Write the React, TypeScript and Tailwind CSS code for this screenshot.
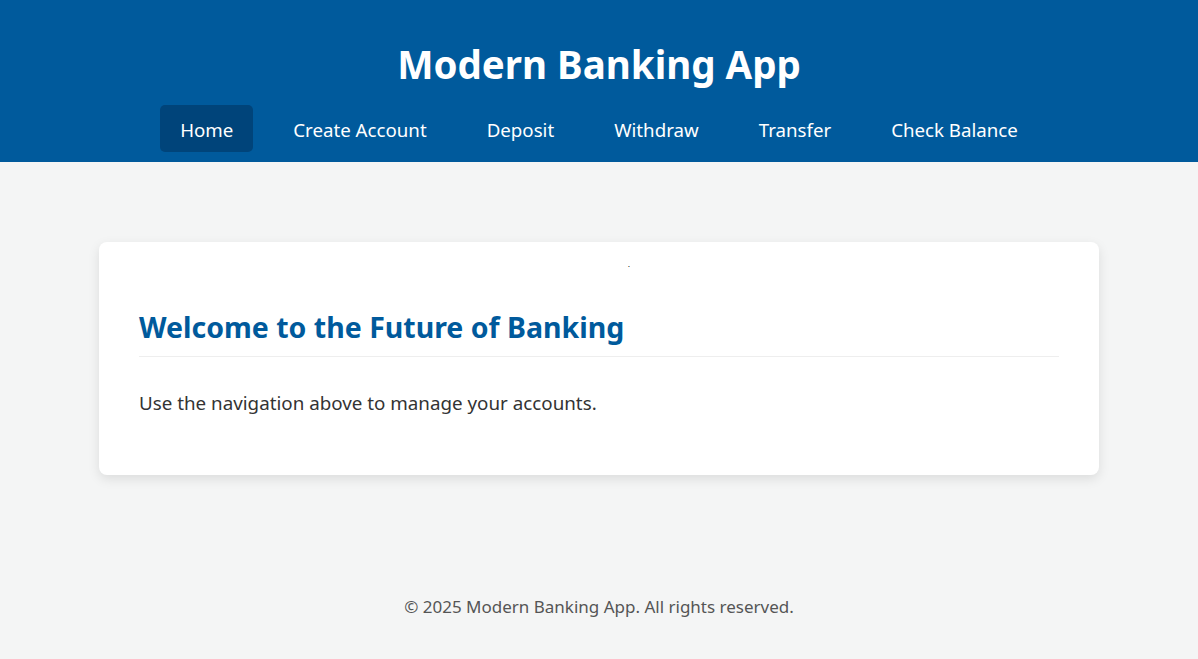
export default function App() {
  const links = ['Home', 'Create Account', 'Deposit', 'Withdraw', 'Transfer', 'Check Balance'];

  return (
    <div
      className="min-h-[659px] flex flex-col bg-[#f4f5f5] text-[#333]"
      style={{ fontFamily: '"Noto Sans", "Open Sans", sans-serif' }}
    >
      <header className="bg-[#005a9c] text-white pt-[36px] pb-[10px]">
        <h1 className="text-center text-[38.5px] font-bold leading-[56px]">Modern Banking App</h1>
        <nav className="mt-[13px] flex justify-center gap-[20px]">
          {links.map((link, i) => (
            <a
              key={link}
              href="#"
              className={
                'px-[20px] pt-[12px] pb-[10px] rounded-[5px] text-[18.7px] leading-[25px] ' +
                (i === 0 ? 'bg-[#00447a]' : '')
              }
            >
              {link}
            </a>
          ))}
        </nav>
      </header>

      <main className="flex justify-center pt-[80px]">
        <div className="w-[1000px] bg-white rounded-[8px] shadow-[0_4px_12px_rgba(0,0,0,0.1)] px-[40px] pt-[20px] pb-[59px]">
          <div className="ml-[60px] text-center text-[7px] leading-[6px] text-black">.</div>
          <h2 className="mt-[40px] text-[28.5px] font-bold text-[#005a9c] leading-[38px] pb-[10px] border-b border-[#eee]">
            Welcome to the Future of Banking
          </h2>
          <p className="mt-[34px] text-[18.8px] leading-[25px]">Use the navigation above to manage your accounts.</p>
        </div>
      </main>

      <footer className="mt-auto pb-[40px] text-center text-[17px] text-[#555] leading-[25px]">
        © 2025 Modern Banking App. All rights reserved.
      </footer>
    </div>
  );
}
